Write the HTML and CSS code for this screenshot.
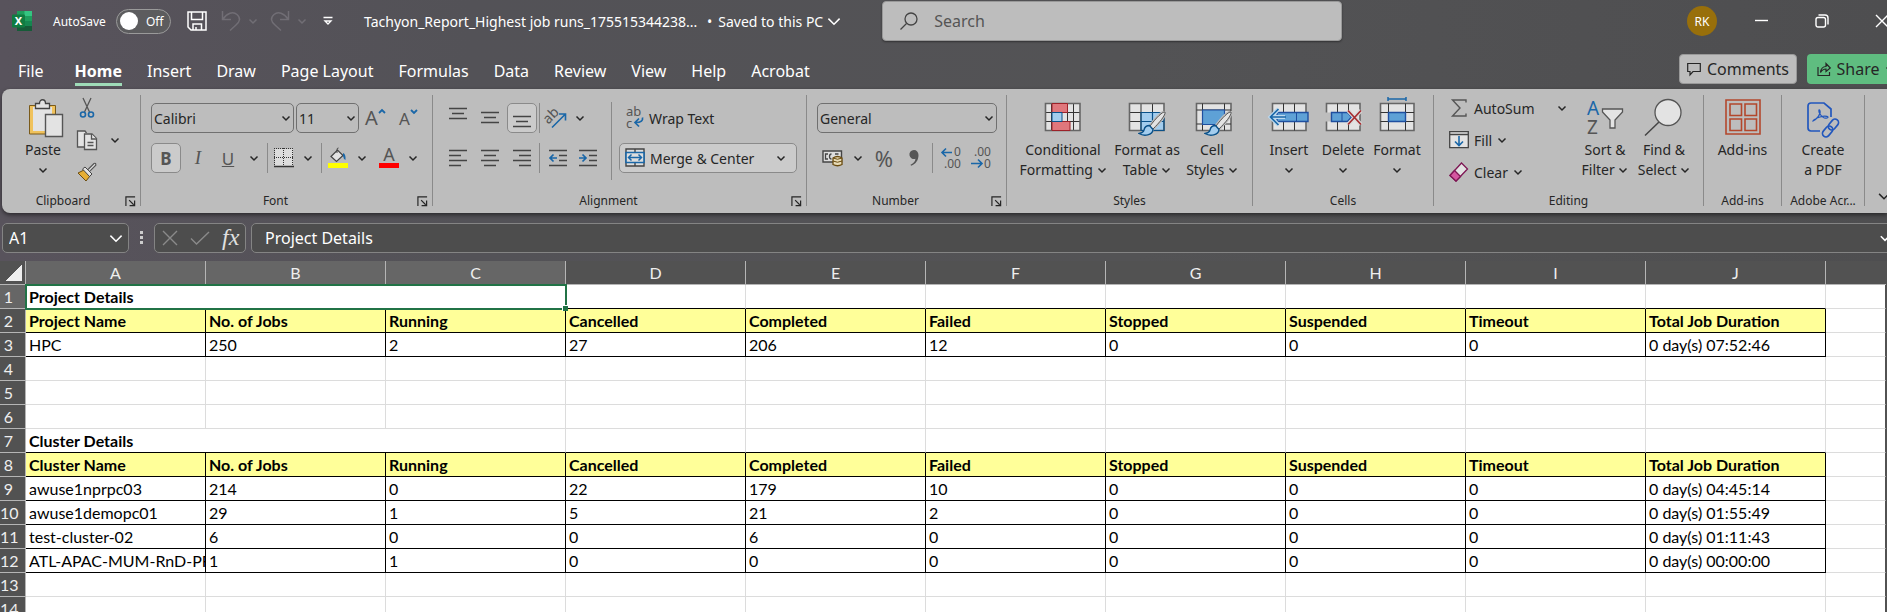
FILE: index.html
```html
<!DOCTYPE html>
<html lang="en">
<head>
    <meta charset="UTF-8">
    <meta name="viewport" content="width=device-width, initial-scale=1.0">
    <title>Tachyon_Report_Highest job runs - Excel</title>
    <link rel="stylesheet" href="styles.css">
</head>
<body>
    <svg class="defs" aria-hidden="true">
        <symbol id="chev" viewBox="0 0 10 10"><path d="M1.500 3.500 5 7l3.500-3.500" fill="none" stroke="currentColor" stroke-width="1.500" vector-effect="non-scaling-stroke"/></symbol>
        <symbol id="launch" viewBox="0 0 12 12"><path d="M1 11V1h10M4.500 4.500l5 5M10.500 5v5.500H5" fill="none" stroke="currentColor" stroke-width="1.300"/></symbol>
        <symbol id="brush" viewBox="0 0 28 26"><path d="M27 1c-2-1-9 6-15 14l3 3C21 12 28 4 27 1z" fill="#e3e3e3" stroke="#bdbdbd" stroke-width="3"/><path d="M27 1c-2-1-9 6-15 14l3 3C21 12 28 4 27 1z" fill="#e3e3e3" stroke="#555"/><path d="M11.500 14.500c-4 0-5 2-5.500 4.500-.5 2-2 3-5 3.500 5 3 13.500 2 14-4z" fill="#a3cdee" stroke="#0a5189" stroke-width="1.400"/></symbol>
    </svg>

    <header class="titlebar">
        <svg class="logo" viewBox="0 0 20 20"><path d="M5 0h15v20H5z" fill="#1f9d5c"/><path d="M12.500 0H20v5h-7.500z" fill="#34c481"/><path d="M5 5h7.500v5H5z" fill="#158048"/><path d="M5 10h15v5H5z" fill="#168650"/><path d="M5 15h15v5H5z" fill="#165b38"/><rect y="3.500" width="13" height="13" rx="1" fill="#107c41"/><text x="6.500" y="14" text-anchor="middle" font-size="11" font-weight="bold" fill="#fff">X</text></svg>
        <label class="autosave" for="autosave">AutoSave</label>
        <span class="toggle"><input type="checkbox" id="autosave"><span class="knob"></span><span>Off</span></span>
        <button class="save" aria-label="Save"><svg width="20" height="20" viewBox="0 0 20 20" fill="none" stroke="currentColor" stroke-width="1.500"><path d="M1 1h18v18H4l-3-3z"/><path d="M4.500 1v7.500h11V1M6 19v-6h8.500v6M9 19v-3"/></svg></button>
        <button class="faded" aria-label="Undo"><svg width="20" height="22" viewBox="0 0 20 22" fill="none" stroke="currentColor" stroke-width="1.500"><path d="M1.500 1v8.500H10M2 9C6 3 12 1 16 4.500s3 7-1 10.500l-6 5.500"/></svg></button>
        <button class="faded drop" aria-label="Undo list"><svg width="10" height="10"><use href="#chev"/></svg></button>
        <button class="faded redo" aria-label="Redo"><svg width="20" height="22" viewBox="0 0 20 22" fill="none" stroke="currentColor" stroke-width="1.500"><path d="M18.500 1v8.500H10M18 9C14 3 8 1 4 4.500s-3 7 1 10.500l6 5.500"/></svg></button>
        <button class="faded drop" aria-label="Redo list"><svg width="10" height="10"><use href="#chev"/></svg></button>
        <button class="customize" aria-label="Customize Quick Access Toolbar"><svg width="10" height="10" viewBox="0 0 10 10" fill="none" stroke="currentColor" stroke-width="1.300"><path d="M.5 1.500h9M2 5l3 3 3-3z"/></svg></button>
        <span class="filename">Tachyon_Report_Highest job runs_175515344238...</span>
        <span class="dot">•</span>
        <button class="saved">Saved to this PC <svg width="16" height="16"><use href="#chev"/></svg></button>
        <div class="search">
            <svg width="18" height="18" viewBox="0 0 18 18" fill="none" stroke="#444" stroke-width="1.300"><circle cx="11" cy="7" r="6"/><path d="M6.500 11.500.5 17.500"/></svg>
            <input type="text" placeholder="Search" aria-label="Search">
        </div>
        <div class="window">
            <button class="avatar">RK</button>
            <button aria-label="Minimize"><svg width="14" height="14" viewBox="0 0 14 14" stroke="currentColor" stroke-width="1.400"><path d="M0 6.500h13"/></svg></button>
            <button aria-label="Restore"><svg width="14" height="14" viewBox="0 0 14 14" fill="none" stroke="currentColor" stroke-width="1.400"><rect x="1" y="3.500" width="9.500" height="9.500" rx="2"/><path d="M3.500 1h6.500q3 0 3 3v6.500"/></svg></button>
            <button aria-label="Close"><svg width="14" height="14" viewBox="0 0 14 14" stroke="currentColor" stroke-width="1.400"><path d="m1 1 12 12M13 1 1 13"/></svg></button>
        </div>
    </header>

    <nav class="tabs">
        <a href="#file" class="file">File</a>
        <a href="#home" class="active">Home</a>
        <a href="#insert">Insert</a>
        <a href="#draw">Draw</a>
        <a href="#layout">Page Layout</a>
        <a href="#formulas">Formulas</a>
        <a href="#data">Data</a>
        <a href="#review">Review</a>
        <a href="#view">View</a>
        <a href="#help">Help</a>
        <a href="#acrobat">Acrobat</a>
        <div class="actions">
            <button class="comments"><svg width="14" height="14" viewBox="0 0 14 14" fill="none" stroke="currentColor" stroke-width="1.200"><path d="M.7 1.500h12.600v8H6l-3 3.500V9.500H.7z"/></svg>Comments</button>
            <button class="share"><svg width="14" height="16" viewBox="0 0 14 16" fill="none" stroke="currentColor" stroke-width="1.200"><path d="M1 6v8.500h11.500V11M3.500 11.500c.5-4 2-6 5.500-6V2.500L13.300 7 9 10.500V8c-2.500 0-4 1-5.500 3.500z"/></svg>Share <svg width="10" height="10"><use href="#chev"/></svg></button>
        </div>
    </nav>

    <main class="ribbon">
        <section class="group clipboard">
            <div class="body">
                <button class="big">
                    <svg width="40" height="40" viewBox="0 0 40 40"><path d="M6.500 7.500h26v28.500h-26z" fill="#f0c25c" stroke="#7a5a1a"/><path d="M10 9h19v24H10z" fill="#e3e3e3"/><path d="M12.500 10.500v-5h4c0-5 6-5 6 0h4v5z" fill="#e3e3e3" stroke="#444" stroke-width="1.300"/><path d="M22.500 16.500h17v22h-17z" fill="#e3e3e3" stroke="#555" stroke-width="1.400"/></svg>
                    <span>Paste</span>
                    <svg width="10" height="20"><use href="#chev"/></svg>
                </button>
                <div class="small">
                    <button aria-label="Cut"><svg width="20" height="22" viewBox="0 0 20 22" fill="none"><path d="m6 1 6.500 14M14 1 7.500 15" stroke="#555" stroke-width="1.300"/><circle cx="6" cy="17.500" r="2.500" stroke="#1a67a8" stroke-width="1.600"/><circle cx="14" cy="17.500" r="2.500" stroke="#1a67a8" stroke-width="1.600"/></svg></button>
                    <span class="split"><button aria-label="Copy"><svg width="22" height="22" viewBox="0 0 22 22" fill="#e3e3e3" stroke="#555" stroke-width="1.300"><path d="M8 18H1.500V2H9l1.500 2"/><path d="M8.500 5H16l4.500 4.500V20.500h-12z"/><path d="M15.500 5v5h5M11.500 13.500h6M11.500 16.500h6"/></svg></button>
                    <button class="drop" aria-label="Copy options"><svg width="10" height="10"><use href="#chev"/></svg></button></span>
                    <button aria-label="Format Painter"><svg width="20" height="20" viewBox="0 0 20 20"><path d="m1 11 6-3 6 6-4 5z" fill="#e6ae35" stroke="#6b4c10"/><path d="m5.500 7 2.500-2 7 7-2.500 2.500z" fill="#e3e3e3" stroke="#444"/><path d="m11 7.500 6-6q2-1 1.800 1.700l-6 6" fill="#e3e3e3" stroke="#555" stroke-width="1.200"/></svg></button>
                </div>
            </div>
            <div class="caption">Clipboard<button aria-label="Clipboard settings"><svg width="11" height="11"><use href="#launch"/></svg></button></div>
        </section>
        <span class="divider"></span>

        <section class="group font">
            <div class="body">
                <div class="stack">
                    <div class="row">
                        <span class="select fontname"><select aria-label="Font"><option>Calibri</option></select><svg width="10" height="10"><use href="#chev"/></svg></span>
                        <span class="select fontsize"><select aria-label="Font size"><option>11</option></select><svg width="10" height="10"><use href="#chev"/></svg></span>
                        <button class="tool" aria-label="Increase font size"><svg width="22" height="22" viewBox="0 0 22 22"><text x="0" y="18" font-size="20" fill="#555">A</text><path d="m14 6 3-3 3 3" fill="none" stroke="#1a67a8" stroke-width="1.800"/></svg></button>
                        <button class="tool" aria-label="Decrease font size"><svg width="22" height="22" viewBox="0 0 22 22"><text x="2" y="18" font-size="17" fill="#555">A</text><path d="m14 3 3 3 3-3" fill="none" stroke="#1a67a8" stroke-width="1.800"/></svg></button>
                    </div>
                    <div class="row">
                        <button class="tool on"><b>B</b></button>
                        <button class="tool"><i>I</i></button>
                        <button class="tool mid"><u>U</u></button>
                        <button class="drop" aria-label="Underline options"><svg width="10" height="10"><use href="#chev"/></svg></button>
                        <span class="bar"></span>
                        <button class="tool slim" aria-label="Borders"><svg width="20" height="20" viewBox="0 0 20 20"><path d="M1 1h18v17H1z" fill="#ddd"/><path d="M0 .5h20M0 9.500h20M.5 0v18M9.500 0v18M18.500 0v18" stroke="#333" stroke-dasharray="1 1" fill="none"/><path d="M0 18.500h20" stroke="#333" stroke-width="1.600"/></svg></button>
                        <button class="drop" aria-label="Border options"><svg width="10" height="10"><use href="#chev"/></svg></button>
                        <span class="bar"></span>
                        <span class="split"><button class="tool slim" aria-label="Fill color"><svg width="20" height="22" viewBox="0 0 20 22"><path d="M3 9.500 9.500 3l5.500 5.500-6.500 6z" fill="#e3e3e3" stroke="#444" stroke-width="1.200"/><path d="M9 6V2.500Q9 1 10.500 1" stroke="#444" fill="none"/><path d="M15 6q3 1 2.500 7-2-1-2.500-4z" fill="#1a67a8"/><path d="M0 16h20v5H0z" fill="#ff0"/></svg></button>
                        <button class="drop" aria-label="Fill colors"><svg width="10" height="10"><use href="#chev"/></svg></button></span>
                        <span class="split"><button class="tool slim" aria-label="Font color"><svg width="20" height="22" viewBox="0 0 20 22"><text x="10" y="14" text-anchor="middle" font-size="18" fill="#555">A</text><path d="M0 16h20v5H0z" fill="#f00"/></svg></button>
                        <button class="drop" aria-label="Font colors"><svg width="10" height="10"><use href="#chev"/></svg></button></span>
                    </div>
                </div>
            </div>
            <div class="caption">Font<button aria-label="Font settings"><svg width="11" height="11"><use href="#launch"/></svg></button></div>
        </section>
        <span class="divider"></span>

        <section class="group alignment">
            <div class="body">
                <div class="stack">
                    <div class="row">
                        <button class="tool" aria-label="Top Align"><svg width="18" height="22" stroke="#444" stroke-width="1.500"><path d="M0 1.500h18M3 6.500h12M0 11.500h18"/></svg></button>
                        <button class="tool" aria-label="Middle Align"><svg width="18" height="22" stroke="#444" stroke-width="1.500"><path d="M0 5.500h18M3 10.500h12M0 15.500h18"/></svg></button>
                        <button class="tool on" aria-label="Bottom Align"><svg width="18" height="22" stroke="#444" stroke-width="1.500"><path d="M0 9.500h18M3 14.500h12M0 19.500h18"/></svg></button>
                        <span class="bar"></span>
                        <button class="tool slim" aria-label="Orientation"><svg width="22" height="22" viewBox="0 0 22 22"><text transform="rotate(-45 6 12)" x="0" y="14" font-size="14" fill="#555">ab</text><path d="M7 20.500 20 7.500M14 7h6.500v6.500" stroke="#1a67a8" stroke-width="1.600" fill="none"/></svg></button>
                        <button class="drop" aria-label="Orientation options"><svg width="10" height="10"><use href="#chev"/></svg></button>
                    </div>
                    <div class="row">
                        <button class="tool" aria-label="Align Left"><svg width="18" height="20" stroke="#444" stroke-width="1.400"><path d="M0 2.500h18M0 7.500h12M0 12.500h18M0 17.500h12"/></svg></button>
                        <button class="tool" aria-label="Center"><svg width="18" height="20" stroke="#444" stroke-width="1.400"><path d="M0 2.500h18M3 7.500h12M0 12.500h18M3 17.500h12"/></svg></button>
                        <button class="tool" aria-label="Align Right"><svg width="18" height="20" stroke="#444" stroke-width="1.400"><path d="M0 2.500h18M6 7.500h12M0 12.500h18M6 17.500h12"/></svg></button>
                        <span class="bar"></span>
                        <button class="tool mid" aria-label="Decrease Indent"><svg width="18" height="20" fill="none" stroke="#444" stroke-width="1.400"><path d="M0 2.500h18M10 7.500h8M10 12.500h8M0 17.500h18"/><path d="M8 10H1M4.500 6.500 1 10l3.500 3.500" stroke="#1a67a8" stroke-width="1.700"/></svg></button>
                        <button class="tool" aria-label="Increase Indent"><svg width="18" height="20" fill="none" stroke="#444" stroke-width="1.400"><path d="M0 2.500h18M10 7.500h8M10 12.500h8M0 17.500h18"/><path d="M0 10h7M3.500 6.500 7 10l-3.500 3.500" stroke="#1a67a8" stroke-width="1.700"/></svg></button>
                    </div>
                </div>
                <span class="bar tall"></span>
                <div class="stack">
                    <button class="wide"><svg width="20" height="22" viewBox="0 0 20 22"><text x="2" y="9" font-size="13" fill="#555">ab</text><text x="2" y="21" font-size="13" fill="#555">c</text><path d="M18.500 10.500c.5 3-1 5-7 5M15 11.500l-4 4 4 4" stroke="#1a67a8" stroke-width="1.700" fill="none"/></svg>Wrap Text</button>
                    <button class="wide on"><svg width="20" height="20" viewBox="0 0 20 20"><path d="M1 1h18v17H1z" fill="#ddd" stroke="#444" stroke-width="1.400"/><path d="M10 1v17" stroke="#444" stroke-width="1.400"/><path d="M1 4.500h18v10H1z" fill="#ddd" stroke="#1a67a8" stroke-width="1.600"/><path d="M3.500 9.500h13M6.500 6.500l-3 3 3 3M13.500 6.500l3 3-3 3" stroke="#1a67a8" stroke-width="1.500" fill="none"/></svg>Merge &amp; Center<svg class="end" width="10" height="10"><use href="#chev"/></svg></button>
                </div>
            </div>
            <div class="caption">Alignment<button aria-label="Alignment settings"><svg width="11" height="11"><use href="#launch"/></svg></button></div>
        </section>
        <span class="divider"></span>

        <section class="group number">
            <div class="body">
                <div class="stack">
                    <span class="select"><select aria-label="Number format"><option>General</option></select><svg width="10" height="10"><use href="#chev"/></svg></span>
                    <div class="row tight">
                        <button class="tool" aria-label="Accounting format"><svg width="20" height="18" viewBox="0 0 20 18"><path d="M1 2h18.500v11H1z" fill="#ddd" stroke="#444" stroke-width="1.400"/><path d="M6 5H3.500v5H6M9.500 5q-2 0-2 2.500T9.500 10M13 5h3.500" stroke="#444" stroke-width="1.300" fill="none"/><path d="M11 9q4.500-3 9 0v6.500q-4.500 2.500-9 0z" fill="#e8dcb8" stroke="#6b4c10" stroke-width="1.300"/><path d="M11 9q4.500 2.500 9 0M11 12q4.500 2.500 9 0" stroke="#6b4c10" fill="none"/></svg></button>
                        <button class="drop" aria-label="Accounting formats"><svg width="10" height="10"><use href="#chev"/></svg></button>
                        <button class="tool percent">%</button>
                        <button class="tool" aria-label="Comma Style"><svg width="12" height="18" viewBox="0 0 12 18"><path d="M6 1a4.500 4.500 0 1 0 1.500 8.700C7 13 5 14.500 2.500 15.700l.6 1C8 15 10.500 11 10.500 6 10.500 3 8.500 1 6 1z" fill="#555"/></svg></button>
                        <span class="bar"></span>
                        <button class="tool" aria-label="Increase Decimal"><svg width="20" height="22" viewBox="0 0 20 22"><text x="13" y="9" font-size="12" fill="#555">0</text><text x="3" y="21" font-size="12" fill="#555">.00</text><path d="M11 5.500H1M5 1.500l-4 4 4 4" stroke="#1a67a8" stroke-width="1.600" fill="none"/></svg></button>
                        <button class="tool" aria-label="Decrease Decimal"><svg width="20" height="22" viewBox="0 0 20 22"><text x="3" y="9" font-size="12" fill="#555">.00</text><text x="13" y="21" font-size="12" fill="#555">0</text><path d="M0 16.500h11M7 12.500l4 4-4 4" stroke="#1a67a8" stroke-width="1.600" fill="none"/></svg></button>
                    </div>
                </div>
            </div>
            <div class="caption">Number<button aria-label="Number settings"><svg width="11" height="11"><use href="#launch"/></svg></button></div>
        </section>
        <span class="divider"></span>

        <section class="group styles">
            <div class="body">
                <button class="big">
                    <svg width="40" height="40" viewBox="0 0 40 40"><path d="M2.500 5.500h34.500v27H2.500z" fill="#e3e3e3"/><path d="M8.500 5.500v27M30.500 5.500v27M24.500 5.500v27M2.500 14.500h34.500M2.500 23.500h34.500" stroke="#333"/><path d="M2.500 5.500h34.500v27H2.500z" fill="none" stroke="#666" stroke-width="1.600"/><path d="M9 5.500h15.500v9H9zM9 23.500h18v9H9z" fill="#e0777c" stroke="#9c2229"/><path d="M9 14.500h10v9H9z" fill="#a3cdee" stroke="#0a5189"/></svg>
                    <span>Conditional<br>Formatting <svg width="10" height="10"><use href="#chev"/></svg></span>
                </button>
                <button class="big">
                    <svg width="40" height="40" viewBox="0 0 40 40"><path d="M2.500 5.500h34.500v27H2.500z" fill="#e3e3e3"/><path d="M14.500 14.500h22.500v18H14.500z" fill="#a3cdee"/><path d="M14 5.500v27M25.500 5.500v9M2.500 14.500h34.500M2.500 23.500h11" stroke="#333"/><path d="M2.500 5.500h34.500v27H2.500z" fill="none" stroke="#666" stroke-width="1.600"/><path d="M25.500 14.500v18M14 23.500h23M14 14.500h23v18H14z" fill="none" stroke="#0a5189" stroke-width="1.200"/><use href="#brush" x="11" y="13" width="28" height="26"/></svg>
                    <span>Format as<br>Table <svg width="10" height="10"><use href="#chev"/></svg></span>
                </button>
                <button class="big">
                    <svg width="40" height="40" viewBox="0 0 40 40"><path d="M4.500 5.500H39v27H4.500z" fill="#e3e3e3" stroke="#666" stroke-width="1.600"/><path d="M10.500 5.500v27M32.500 5.500v27M4.500 12h34.500M4.500 26h34.500" stroke="#333"/><path d="M10.500 12h22v14.500h-22z" fill="#5ea1d6" stroke="#1f4fa0" stroke-width="1.200"/><use href="#brush" x="12" y="13" width="28" height="26"/></svg>
                    <span>Cell<br>Styles <svg width="10" height="10"><use href="#chev"/></svg></span>
                </button>
            </div>
            <div class="caption">Styles</div>
        </section>
        <span class="divider"></span>

        <section class="group cells">
            <div class="body">
                <button class="big">
                    <svg width="40" height="40" viewBox="0 0 40 40"><path d="M3.500 5.500H37v27H3.500z" fill="#e3e3e3" stroke="#666" stroke-width="1.600"/><path d="M14.500 5.500v27M25.500 5.500v27" stroke="#333"/><path d="M8 14.500h31v9H8z" fill="#5ea1d6" stroke="#1f4fa0" stroke-width="1.400"/><path d="M27.500 14.500v9" stroke="#1f4fa0"/><path d="M16 19H1.500M9.500 11l-8 8 8 8" fill="none" stroke="#bdd9ee" stroke-width="4"/><path d="M17 19H1.500M9.500 11l-8 8 8 8" fill="none" stroke="#1a67a8" stroke-width="1.600"/></svg>
                    <span>Insert</span>
                    <svg width="10" height="20"><use href="#chev"/></svg>
                </button>
                <button class="big">
                    <svg width="40" height="40" viewBox="0 0 40 40"><path d="M3.500 5.500H37v27H3.500z" fill="#e3e3e3" stroke="#666" stroke-width="1.600"/><path d="M14.500 5.500v27M25.500 5.500v27" stroke="#333"/><path d="M2 14.500h26v9H2z" fill="#bdbdbd"/><path d="M8.500 14.500h16l4 4.500-4 4.500h-16z" fill="#5ea1d6" stroke="#1f4fa0" stroke-width="1.400"/><path d="M19 14.500v9" stroke="#1f4fa0"/><path d="m25 12.500 13 14M38 12.500l-13 14" stroke="#d8d8d8" stroke-width="4"/><path d="m25 12.500 13 14M38 12.500l-13 14" stroke="#a62a2e" stroke-width="1.600"/></svg>
                    <span>Delete</span>
                    <svg width="10" height="20"><use href="#chev"/></svg>
                </button>
                <button class="big">
                    <svg width="40" height="40" viewBox="0 0 40 40"><path d="M3.500 5.500H37v27H3.500z" fill="#e3e3e3" stroke="#666" stroke-width="1.600"/><path d="M11.500 5.500v27M28.500 5.500v27M3.500 14.500H37M3.500 23.500H37" stroke="#333"/><path d="M11.500 14.500h17v9h-17z" fill="#5ea1d6" stroke="#1f4fa0" stroke-width="1.400"/><path d="M11 1h18M11-1v4M29-1v4" stroke="#1a67a8" stroke-width="1.500"/></svg>
                    <span>Format</span>
                    <svg width="10" height="20"><use href="#chev"/></svg>
                </button>
            </div>
            <div class="caption">Cells</div>
        </section>
        <span class="divider"></span>

        <section class="group editing">
            <div class="body">
                <div class="small">
                    <span class="split"><button class="labelled"><svg width="20" height="20" viewBox="0 0 20 20" fill="none" stroke="#555" stroke-width="1.400"><path d="M17 4.500V2H3.500l7.500 8-7.500 8H17v-2.500"/></svg>AutoSum</button><button class="drop end" aria-label="AutoSum options"><svg width="10" height="10"><use href="#chev"/></svg></button></span>
                    <button class="labelled"><svg width="20" height="20" viewBox="0 0 20 20" fill="none"><path d="M.7 1.700h18.600v16H.7z" fill="#e3e3e3" stroke="#444" stroke-width="1.300"/><path d="M1 4.500h18" stroke="#444" stroke-width="1.300"/><path d="M10 6v9.500M6 11.500l4 4 4-4" stroke="#1a67a8" stroke-width="1.600"/></svg>Fill <svg width="10" height="10"><use href="#chev"/></svg></button>
                    <button class="labelled"><svg width="20" height="20" viewBox="0 0 20 20"><path d="M1 13.500 12.500 1l6 6L7 19z" fill="#e3e3e3" stroke="#7e1654" stroke-width="1.300"/><path d="m1 13.500 4.500-5 6 6L7 19z" fill="#d457a0" stroke="#7e1654" stroke-width="1.300"/></svg>Clear <svg width="10" height="10"><use href="#chev"/></svg></button>
                </div>
                <button class="big">
                    <svg width="40" height="40" viewBox="0 0 40 40"><text x="2" y="17" font-size="19" fill="#1a67a8">A</text><text x="2" y="36" font-size="19" fill="#555">Z</text><path d="M17.500 11h20v3l-7.500 8v8h-5v-8l-7.500-8z" fill="#e3e3e3" stroke="#555" stroke-width="1.300"/></svg>
                    <span>Sort &amp;<br>Filter <svg width="10" height="10"><use href="#chev"/></svg></span>
                </button>
                <button class="big">
                    <svg width="40" height="40" viewBox="0 0 40 40"><path d="M15 24 1 37.500" stroke="#444" stroke-width="1.500"/><circle cx="24" cy="14.500" r="13" fill="#e3e3e3" stroke="#555" stroke-width="1.300"/></svg>
                    <span>Find &amp;<br>Select <svg width="10" height="10"><use href="#chev"/></svg></span>
                </button>
            </div>
            <div class="caption">Editing</div>
        </section>
        <span class="divider"></span>

        <section class="group addins">
            <div class="body">
                <button class="big">
                    <svg width="40" height="40" viewBox="0 0 40 40" fill="none" stroke="#b3472c" stroke-width="1.600"><path d="M3 2h34v34H3zM7 6h11.500v11.500H7zM22 6h11.500v11.500H22zM7 21h11.500v11.500H7zM22 21h11.500v11.500H22z"/></svg>
                    <span>Add-ins</span>
                </button>
            </div>
            <div class="caption">Add-ins</div>
        </section>
        <span class="divider"></span>

        <section class="group acrobat">
            <div class="body">
                <button class="big">
                    <svg width="40" height="40" viewBox="0 0 40 40" fill="none" stroke="#2257bd" stroke-width="1.700"><path d="M17 33H8q-3 0-3-3V8q0-3 3-3h13l7 6v8"/><path d="M10 23c4-2 8-7 7-10s-2 0 0 3 4 5 7 4-1-3-7-1-7 3-7 4z" stroke-width="1.200"/><g transform="rotate(-50 27.500 30)"><rect x="17" y="26.500" width="12" height="7" rx="3.500"/><rect x="26" y="26.500" width="12" height="7" rx="3.500"/></g></svg>
                    <span>Create<br>a PDF</span>
                </button>
            </div>
            <div class="caption">Adobe Acr...</div>
        </section>
        <span class="divider"></span>
        <button class="collapse" aria-label="Ribbon display options"><svg width="14" height="14"><use href="#chev"/></svg></button>
    </main>

    <div class="formulabar">
        <div class="namebox"><input type="text" value="A1" aria-label="Name box"><svg width="16" height="16"><use href="#chev"/></svg></div>
        <svg class="dots" width="4" height="16" fill="#ccc"><path d="M0 1h3v3H0zM0 6h3v3H0zM0 11h3v3H0z"/></svg>
        <div class="entry">
            <button aria-label="Cancel"><svg width="16" height="16" viewBox="0 0 16 16" stroke="#8a8a8a" stroke-width="1.400"><path d="m1 1 14 14M15 1 1 15"/></svg></button>
            <button aria-label="Enter"><svg width="20" height="16" viewBox="0 0 20 16" fill="none" stroke="#8a8a8a" stroke-width="1.400"><path d="m1 8.500 5.500 5.500L19 2"/></svg></button>
            <button class="fx">fx</button>
        </div>
        <div class="formula"><input type="text" value="Project Details" aria-label="Formula"><svg width="12" height="12"><use href="#chev"/></svg></div>
    </div>

    <div class="sheet">
        <table>
            <colgroup><col class="rownum"><col><col><col><col><col><col><col><col><col><col><col class="rest"></colgroup>
            <thead>
                <tr><th class="corner"></th><th class="sel">A</th><th class="sel">B</th><th class="sel">C</th><th>D</th><th>E</th><th>F</th><th>G</th><th>H</th><th>I</th><th>J</th><th></th></tr>
            </thead>
            <tbody>
                <tr class="title"><th class="sel">1</th><td colspan="3" class="picked">Project Details</td><td></td><td></td><td></td><td></td><td></td><td></td><td></td><td></td></tr>
                <tr class="data head"><th>2</th><td>Project Name</td><td>No. of Jobs</td><td>Running</td><td>Cancelled</td><td>Completed</td><td>Failed</td><td>Stopped</td><td>Suspended</td><td>Timeout</td><td>Total Job Duration</td><td></td></tr>
                <tr class="data"><th>3</th><td>HPC</td><td>250</td><td>2</td><td>27</td><td>206</td><td>12</td><td>0</td><td>0</td><td>0</td><td>0 day(s) 07:52:46</td><td></td></tr>
                <tr><th>4</th><td></td><td></td><td></td><td></td><td></td><td></td><td></td><td></td><td></td><td></td><td></td></tr>
                <tr><th>5</th><td></td><td></td><td></td><td></td><td></td><td></td><td></td><td></td><td></td><td></td><td></td></tr>
                <tr><th>6</th><td></td><td></td><td></td><td></td><td></td><td></td><td></td><td></td><td></td><td></td><td></td></tr>
                <tr class="title"><th>7</th><td colspan="3">Cluster Details</td><td></td><td></td><td></td><td></td><td></td><td></td><td></td><td></td></tr>
                <tr class="data head"><th>8</th><td>Cluster Name</td><td>No. of Jobs</td><td>Running</td><td>Cancelled</td><td>Completed</td><td>Failed</td><td>Stopped</td><td>Suspended</td><td>Timeout</td><td>Total Job Duration</td><td></td></tr>
                <tr class="data"><th>9</th><td>awuse1nprpc03</td><td>214</td><td>0</td><td>22</td><td>179</td><td>10</td><td>0</td><td>0</td><td>0</td><td>0 day(s) 04:45:14</td><td></td></tr>
                <tr class="data"><th>10</th><td>awuse1demopc01</td><td>29</td><td>1</td><td>5</td><td>21</td><td>2</td><td>0</td><td>0</td><td>0</td><td>0 day(s) 01:55:49</td><td></td></tr>
                <tr class="data"><th>11</th><td>test-cluster-02</td><td>6</td><td>0</td><td>0</td><td>6</td><td>0</td><td>0</td><td>0</td><td>0</td><td>0 day(s) 01:11:43</td><td></td></tr>
                <tr class="data"><th>12</th><td>ATL-APAC-MUM-RnD-PR</td><td>1</td><td>1</td><td>0</td><td>0</td><td>0</td><td>0</td><td>0</td><td>0</td><td>0 day(s) 00:00:00</td><td></td></tr>
                <tr><th>13</th><td></td><td></td><td></td><td></td><td></td><td></td><td></td><td></td><td></td><td></td><td></td></tr>
                <tr><th>14</th><td></td><td></td><td></td><td></td><td></td><td></td><td></td><td></td><td></td><td></td><td></td></tr>
            </tbody>
        </table>
    </div>
</body>
</html>
```
FILE: styles.css
```css
* { box-sizing: border-box; }
body { margin: 0; height: 100vh; overflow: hidden; display: flex; flex-direction: column; font-family: "Noto Sans", "Open Sans", sans-serif; font-size: 14px; color: #fff; background: linear-gradient(90deg, #58535c 0, #535257 25%, #535355 60%, #4e4e50 100%); }
button { display: flex; align-items: center; justify-content: center; padding: 0; border: 0; background: none; color: inherit; font: inherit; flex: none; white-space: nowrap; }
input, select { font: inherit; color: inherit; background: none; border: 0; padding: 0; outline: 0; min-width: 0; }
svg { flex: none; overflow: visible; }
.defs { position: absolute; width: 0; height: 0; }

/* title bar */
.titlebar { display: flex; align-items: center; height: 42px; flex: none; padding-left: 12px; font-size: 14px; }
.logo { width: 20px; height: 20px; }
.autosave { margin-left: 21px; width: 53px; font-size: 12px; white-space: nowrap; }
.toggle { display: flex; align-items: center; gap: 8px; margin-left: 10px; width: 55px; height: 25px; padding-left: 3px; border: 1px solid #9a9a9a; border-radius: 13px; background: #5c5c5e; font-size: 12px; }
.toggle input { position: absolute; opacity: 0; width: 50px; height: 24px; margin: 0; }
.knob { width: 18px; height: 18px; border-radius: 50%; background: #fff; }
.save { margin-left: 16px; }
.faded { color: #716e75; margin-left: 14px; }
.titlebar .drop { width: 14px; margin-left: 5px; }
.titlebar .redo { margin-left: 10px; }
.customize { margin-left: 14px; }
.filename { margin-left: 31px; width: 331px; white-space: nowrap; }
.dot { margin: 0 6px 0 12px; }
.saved { gap: 3px; width: 126px; justify-content: flex-start; }
.search { display: flex; align-items: center; gap: 16px; margin-left: 38px; padding-left: 17px; width: 460px; height: 40px; background: #bdbdbd; border: 1px solid #999; border-radius: 4px; color: #444; box-shadow: 0 1px 2px rgba(0,0,0,0.4); font-size: 16px; }
.search input::placeholder { color: #555; opacity: 1; }
.window { display: flex; align-items: center; gap: 46px; margin-left: auto; margin-right: -2px; }
.avatar { width: 30px; height: 30px; margin-right: -8px; border-radius: 50%; background: #986f0b; font-size: 12px; }

/* tabs */
.tabs { display: flex; align-items: center; height: 47px; flex: none; padding: 11px 0 0 18px; gap: 25px; font-size: 16px; }
.tabs a { color: #fff; text-decoration: none; height: 36px; padding-top: 7px; white-space: nowrap; }
.tabs .file { margin-right: 6px; }
.tabs .active { font-weight: bold; background: linear-gradient(#9fdbb8, #9fdbb8) 0 30px / 100% 3px no-repeat; }
.actions { display: flex; gap: 10px; margin: -5px -16px 0 auto; color: #262626; }
.comments { height: 30px; width: 118px; gap: 6px; background: #bdbdbd; border: 1px solid #999; border-radius: 4px; }
.share { height: 30px; width: 96px; gap: 6px; padding-left: 2px; background: #5fbd80; border-radius: 4px; }

/* ribbon */
.ribbon { display: flex; flex: none; height: 124px; margin-left: 2px; background: #bdbdbd; color: #262626; border-radius: 8px 0 0 8px; box-shadow: 0 2px 4px rgba(0,0,0,0.5); overflow: hidden; }
.divider { width: 1px; margin: 6px 0 7px; background: #8a8a8a; flex: none; }
.group { display: flex; flex-direction: column; flex: none; padding-top: 6px; }
.body { display: flex; height: 93px; }
.caption { display: flex; align-items: center; justify-content: center; position: relative; height: 25px; font-size: 12px; }
.caption button { position: absolute; right: 4px; top: 8px; }
.clipboard { width: 138px; }
.clipboard .body { padding-left: 14px; }
.clipboard .caption { padding-right: 16px; }
.font { width: 291px; }
.font .caption { padding-right: 22px; }
.alignment { width: 373px; }
.alignment .caption { padding-right: 22px; }
.number { width: 199px; }
.number .caption { padding-right: 22px; }
.font .body, .alignment .body, .number .body { padding-left: 10px; }
.styles { width: 245px; }
.styles .body { padding-left: 8px; }
.cells { width: 180px; }
.cells .body { padding-left: 9px; }
.editing { width: 269px; }
.editing .body { padding-left: 15px; }
.addins { width: 77px; }
.acrobat { width: 82px; }
.addins .body, .acrobat .body { justify-content: center; }

.big { flex-direction: column; justify-content: flex-start; padding-top: 3px; width: 54px; line-height: 20px; }
.big span { margin-top: 2px; }
.styles .big:nth-child(1) { width: 96px; }
.styles .big:nth-child(2) { width: 72px; }
.styles .big:nth-child(3) { width: 58px; }
.editing .big:nth-child(2) { width: 64px; }

.small { display: flex; flex-direction: column; align-items: flex-start; gap: 6px; }
.small button { height: 26px; }
.clipboard .small { margin-left: 6px; }
.clipboard .small > button, .clipboard .split button:first-child { width: 22px; }
.clipboard .drop { margin-left: 4px; }
.editing .small { width: 124px; }
.labelled { gap: 5px; }
.split { display: flex; gap: 2px; }
.editing .split { width: 100%; }
.end { margin-left: auto; }

.stack { display: flex; flex-direction: column; gap: 10px; margin-top: 8px; }
.row { display: flex; gap: 2px; height: 30px; }
.tight { gap: 0; }
.tight .bar { margin-left: 3px; }
.tool { width: 30px; height: 30px; border-radius: 5px; color: #555; font-size: 17px; }
.mid { width: 26px; }
.slim { width: 22px; }
.drop { width: 22px; }
.row .split + .split { margin-left: 3px; }
.on { border: 1px solid #8a8a8a; background: #cbcbcb; }
.tool i { font-family: "Liberation Serif", serif; font-size: 19px; }
.percent { font-size: 22px; }
.bar { width: 1px; height: 30px; margin-right: 3px; background: #8a8a8a; flex: none; }
.tall { height: 78px; margin: 7px 7px 0 8px; }
.wide { width: 178px; height: 30px; gap: 5px; padding: 0 10px 0 5px; justify-content: flex-start; border-radius: 5px; }

.select { display: flex; align-items: center; height: 30px; padding-right: 2px; border: 1px solid #707070; border-radius: 5px; width: 180px; font-size: 14px; }
.select select { appearance: none; flex: 1; padding-left: 2px; height: 28px; }
.fontname { width: 143px; }
.fontsize { width: 63px; }
.collapse { align-self: flex-end; height: 34px; margin-left: 12px; }

/* formula bar */
.formulabar { display: flex; align-items: center; flex: none; height: 48px; padding: 3px 0 2px 2px; font-size: 16px; }
.namebox, .entry, .formula { display: flex; align-items: center; height: 30px; background: #4d4d4d; border: 1px solid #848484; border-radius: 5px; }
.namebox { width: 127px; padding: 0 4px 0 6px; }
.namebox input { flex: 1; }
.dots { margin: 0 10px 0 11px; }
.entry { width: 92px; gap: 12px; padding-left: 7px; }
.fx { font-family: "Liberation Serif", serif; font-style: italic; font-size: 24px; color: #e0e0e0; }
.formula { flex: 1; margin: 0 -5px 0 5px; padding: 0 0 0 13px; }
.formula input { flex: 1; }

/* worksheet */
.sheet { flex: 1; overflow: hidden; background: #525252; font-family: Lato, "Open Sans", sans-serif; font-size: 16px; }
table { width: calc(100% - 1px); table-layout: fixed; border-collapse: separate; border-spacing: 0; }
col { width: 180px; }
.rownum { width: 26px; }
.rest { width: auto; }
th, td { height: 24px; padding: 0; line-height: 22px; overflow: hidden; white-space: nowrap; }
th { background: #525252; color: #eee; font-weight: normal; border-right: 1px solid #b5b5b5; border-bottom: 1px solid #b5b5b5; }
th.sel { background: #666; }
tbody th { padding-right: 8px; }
thead th:last-child { border-right: 0; }
.corner { background: linear-gradient(135deg, transparent 50%, #eee 50%) 6px 4px / 16px 16px no-repeat #525252; }
td { background: #fff; color: #000; padding-left: 3px; border-right: 1px solid #dcdcdc; border-bottom: 1px solid #dcdcdc; }
td:last-child { border-right-color: #525252; }
.data td:not(:last-child) { border-color: #000; }
.head td:not(:last-child) { background: #ff9; font-weight: bold; }
.title td { font-weight: bold; }
.title td:not(:last-child) { border-bottom-color: #000; }
.picked { position: relative; outline: 2px solid #217346; outline-offset: -1px; overflow: visible; }
.picked::after { content: ""; position: absolute; right: -3px; bottom: -3px; width: 5px; height: 5px; background: #217346; border: 1px solid #fff; border-width: 1px 0 0 1px; }
```
